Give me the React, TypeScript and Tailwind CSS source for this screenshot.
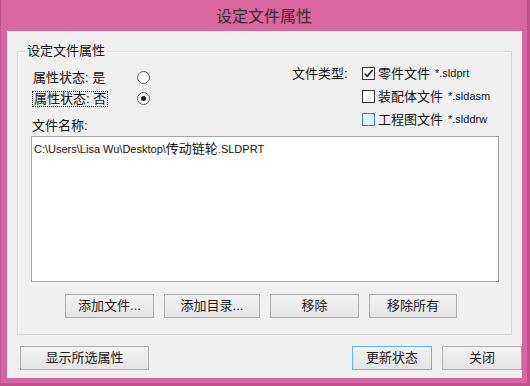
import React from 'react'

const font = "font-['Liberation_Sans','Noto_Sans_CJK_SC',sans-serif]"

// Win8-style push button
function PushButton({ label, width, isDefault }: { label: string; width: string; isDefault?: boolean }) {
  return (
    <button
      className={`${width} h-[24px] flex items-center justify-center border bg-linear-to-b from-[#f2f2f2] to-[#e4e4e4] text-[13px] text-[#1a1a1a] ${
        isDefault ? 'border-[#6eaef0]' : 'border-[#adadad]'
      }`}
    >
      {label}
    </button>
  )
}

function Radio({ checked }: { checked?: boolean }) {
  return (
    <span className="w-[13px] h-[13px] rounded-full border border-[#5c5c5c] bg-white flex items-center justify-center">
      {checked && <span className="w-[5px] h-[5px] rounded-full bg-[#1a1a1a]" />}
    </span>
  )
}

function CheckBox({ checked, hover }: { checked?: boolean; hover?: boolean }) {
  return (
    <span
      className={`w-[13px] h-[13px] border flex items-center justify-center ${
        hover ? 'border-[#3c7fb1] bg-[#e5f1fb]' : 'border-[#333333] bg-white'
      }`}
    >
      {checked && (
        <svg width="11" height="11" viewBox="0 0 11 11">
          <path d="M1.5 5.5 L4.2 8.3 L9.5 2" fill="none" stroke="#1a1a1a" strokeWidth="1.6" />
        </svg>
      )}
    </span>
  )
}

const fileTypes = [
  { name: '零件文件', ext: '*.sldprt', checked: true },
  { name: '装配体文件', ext: '*.sldasm' },
  { name: '工程图文件', ext: '*.slddrw', hover: true },
]

export default function App() {
  return (
    <div className={`w-[530px] h-[386px] flex flex-col bg-[#d8679f] border-l border-r-[3px] border-b-[3px] border-[#c2528b] ${font}`}>
      {/* Title bar */}
      <div className="h-[31px] flex items-center justify-center pb-[2px]">
        <span className="text-[16px] text-[#3a2733] font-['Noto_Sans_CJK_SC',sans-serif]">设定文件属性</span>
      </div>

      {/* Client area */}
      <div className="ml-[6px] mr-[5px] h-[347px] bg-[#f0f0f0] flex flex-col">
        {/* Group box */}
        <div className="relative mt-[20px] mx-[10px] h-[284px] border border-[#d8d8d8] shadow-[inset_1px_1px_0_#ffffff] flex flex-col">
          <span className="absolute -top-[10px] left-[7px] px-[2px] bg-[#f0f0f0] text-[13px] leading-[18px] text-[#111]">
            设定文件属性
          </span>

          <div className="flex pt-[10px]">
            {/* Left column */}
            <div className="w-[274px] pl-[14px] pt-[5px] flex flex-col text-[13px] text-[#111]">
              <div className="h-[21px] flex items-center">
                <span className="w-[105px] pl-[1px]">属性状态: 是</span>
                <Radio />
              </div>
              <div className="h-[21px] flex items-center">
                <span className="w-[105px]">
                  <span className="inline-block h-[16px] leading-[14px] px-[1px] border border-dotted border-[#222]">属性状态: 否</span>
                </span>
                <Radio checked />
              </div>
              <div className="mt-[8px] h-[18px] flex items-center">文件名称:</div>
            </div>

            {/* Right column */}
            <div className="flex text-[13px] text-[#111]">
              <div className="w-[70px] h-[23px] flex items-center">文件类型:</div>
              <div className="flex flex-col">
                {fileTypes.map((t) => (
                  <div key={t.ext} className="h-[23px] flex items-center gap-[2px]">
                    <CheckBox checked={t.checked} hover={t.hover} />
                    <span className="ml-[1px]">{t.name}</span>
                    <span className="ml-[3px] text-[11px]">{t.ext}</span>
                  </div>
                ))}
              </div>
            </div>
          </div>

          {/* File list */}
          <div className="mt-[1px] ml-[13px] w-[468px] h-[146px] border border-[#a3a3a3] bg-white px-[2px] pt-[2px] text-[#111] leading-[18px]">
            <span className="text-[11px]">C:\Users\Lisa Wu\Desktop\</span>
            <span className="text-[13px]">传动链轮</span>
            <span className="text-[11px]">.SLDPRT</span>
          </div>

          {/* List actions */}
          <div className="mt-[12px] ml-[47px] flex gap-[10px]">
            <PushButton label="添加文件..." width="w-[89px]" />
            <PushButton label="添加目录..." width="w-[96px]" />
            <PushButton label="移除" width="w-[89px]" />
            <PushButton label="移除所有" width="w-[88px]" />
          </div>
        </div>

        {/* Dialog buttons */}
        <div className="mt-[11px] pl-[13px] flex">
          <PushButton label="显示所选属性" width="w-[129px]" />
          <div className="ml-auto flex gap-[10px]">
            <PushButton label="更新状态" width="w-[80px]" isDefault />
            <PushButton label="关闭" width="w-[80px]" />
          </div>
        </div>
      </div>
    </div>
  )
}
